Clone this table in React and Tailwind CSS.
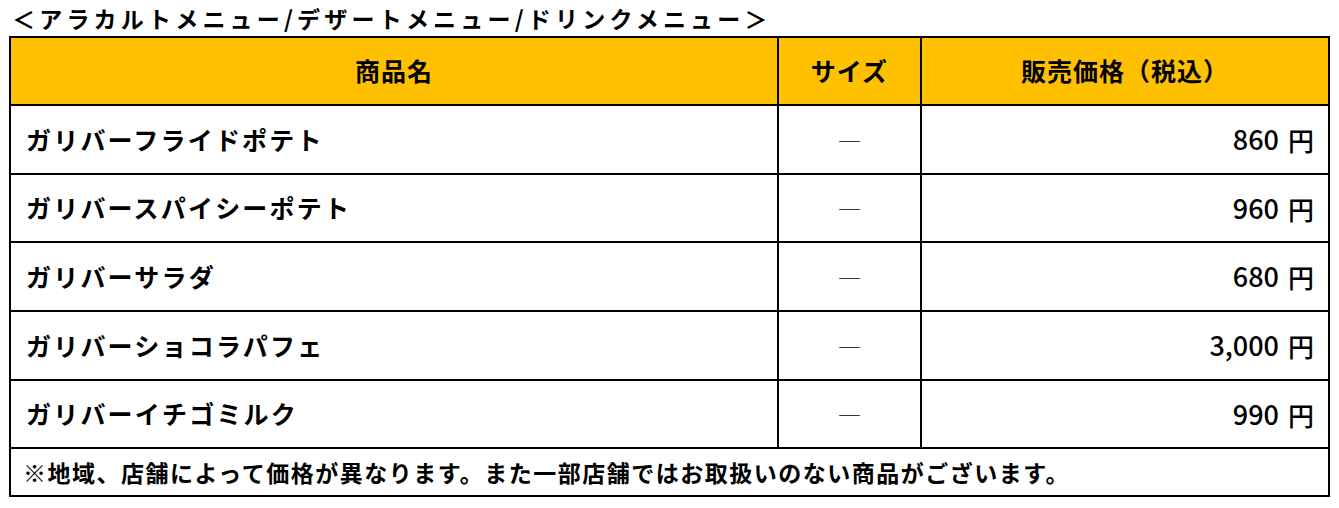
import React from "react";

const rows = [
  { name: "ガリバーフライドポテト", price: "860", h: "h-[69px]" },
  { name: "ガリバースパイシーポテト", price: "960", h: "h-[68px]" },
  { name: "ガリバーサラダ", price: "680", h: "h-[69px]" },
  { name: "ガリバーショコラパフェ", price: "3,000", h: "h-[69px]" },
  { name: "ガリバーイチゴミルク", price: "990", h: "h-[68px]" },
];

export default function App() {
  return (
    <div className="w-[1339px] h-[508px] bg-white text-black font-['Noto_Sans_CJK_JP','Noto_Sans',sans-serif]">
      <div className="h-[36px] pl-[12px] flex items-center text-[23px] font-bold tracking-[4.2px] leading-none">
        ＜アラカルトメニュー/デザートメニュー/ドリンクメニュー＞
      </div>
      <div className="ml-[9px] w-[1321px] border-2 border-black">
        <div className="grid grid-cols-[768px_143px_406px] h-[68px] border-b-2 border-black bg-[#FFC000] text-[25px] font-bold tracking-[1px]">
          <div className="border-r-2 border-black flex items-center justify-center">商品名</div>
          <div className="border-r-2 border-black flex items-center justify-center">サイズ</div>
          <div className="flex items-center justify-center">販売価格（税込）</div>
        </div>
        {rows.map((r) => (
          <div key={r.name} className={`grid grid-cols-[768px_143px_406px] ${r.h} border-b-2 border-black`}>
            <div className="border-r-2 border-black flex items-center pl-[15px] text-[25px] font-bold tracking-[2.2px]">
              {r.name}
            </div>
            <div className="border-r-2 border-black flex items-center justify-center text-[24px] text-[#333]">
              ―
            </div>
            <div className="flex items-center justify-end pr-[14px] font-medium">
              <span className="text-[27px]">{r.price}</span>
              <span className="text-[26px] ml-[9px]">円</span>
            </div>
          </div>
        ))}
        <div className="h-[46px] flex items-center pl-[12px] text-[23px] font-bold tracking-[1.5px]">
          ※地域、店舗によって価格が異なります。また一部店舗ではお取扱いのない商品がございます。
        </div>
      </div>
    </div>
  );
}
